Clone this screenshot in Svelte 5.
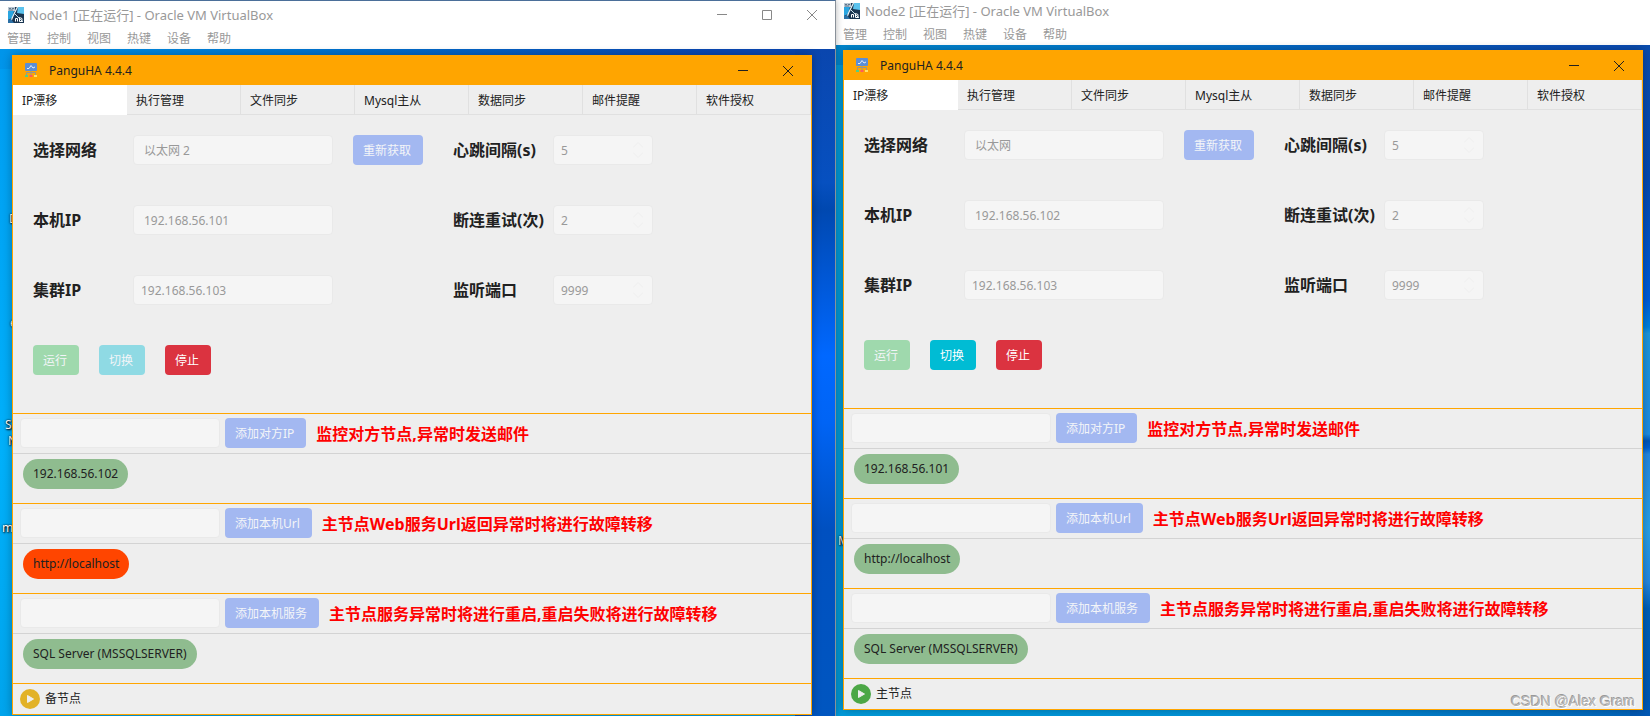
<script lang="ts">
    interface Monitor {
        button: string,
        hint: string,
        item: string,
        failed?: boolean
    }

    interface Shortcut {
        text: string,
        x: number,
        y: number
    }

    interface Machine {
        id: string,
        network: string,
        localIp: string,
        canSwitch: boolean,
        role: string,
        monitors: Array<Monitor>,
        shortcuts: Array<Shortcut>
    }

    const menus = ["管理", "控制", "视图", "热键", "设备", "帮助"]
    const tabs = ["IP漂移", "执行管理", "文件同步", "Mysql主从", "数据同步", "邮件提醒", "软件授权"]
    let activeTab = "IP漂移"

    function buildMonitors(peerIp: string, urlFailed: boolean): Array<Monitor> {
        return [
            { button: "添加对方IP", hint: "监控对方节点,异常时发送邮件", item: peerIp },
            { button: "添加本机Url", hint: "主节点Web服务Url返回异常时将进行故障转移", item: "http://localhost", failed: urlFailed },
            { button: "添加本机服务", hint: "主节点服务异常时将进行重启,重启失败将进行故障转移", item: "SQL Server (MSSQLSERVER)" }
        ]
    }

    const machines: Array<Machine> = [
        {
            id: "Node1",
            network: "以太网 2",
            localIp: "192.168.56.101",
            canSwitch: false,
            role: "备节点",
            monitors: buildMonitors("192.168.56.102", true),
            shortcuts: [
                { text: "D", x: 9, y: 162 },
                { text: "e", x: 10, y: 266 },
                { text: "S", x: 5, y: 368 },
                { text: "N", x: 8, y: 384 },
                { text: "m", x: 2, y: 471 }
            ]
        },
        {
            id: "Node2",
            network: "以太网",
            localIp: "192.168.56.102",
            canSwitch: true,
            role: "主节点",
            monitors: buildMonitors("192.168.56.101", false),
            shortcuts: [
                { text: "M", x: 2, y: 488 }
            ]
        }
    ]
</script>

<main class="screen">
    {#each machines as machine}
        <section class={`vm vm-${machine.id}`}>
            <header class="vm-title">
                <svg class="vm-icon" viewBox="0 0 16 16" aria-hidden="true">
                    <rect width="16" height="16" fill="#1a3550" />
                    <path d="M0 4h6l-2 7-4 2z" fill="#2aa5e0" />
                    <path d="M10 0h6v7l-7-1z" fill="#5cc3ee" />
                    <path d="M0 0h7v4H0z" fill="#b9c6d2" />
                    <path d="M1 1.500h2M4 1.500h2M1 3h4" stroke="#37536d" stroke-width=".7" />
                    <path d="M9.500 0 5 9l-2 5" fill="none" stroke="#e9f4fa" stroke-width="1.200" />
                    <path d="M6 6l9 9" fill="none" stroke="#cfe6f2" />
                    <path d="M0 13l3-1 3 4H0z" fill="#2c70a5" />
                    <path d="M7.500 14.500v-3h2v3M11.500 10.500v4h2.500v-3z" fill="none" stroke="#fff" />
                </svg>
                <h1>{machine.id} [正在运行] - Oracle VM VirtualBox</h1>
                {#if machine.id === "Node1"}
                    <div class="vm-controls">
                        <button aria-label="最小化"><svg viewBox="0 0 10 10"><path d="M0 4.500h10" /></svg></button>
                        <button aria-label="最大化"><svg viewBox="0 0 10 10"><path d="M.5.5h9v9h-9z" /></svg></button>
                        <button aria-label="关闭"><svg viewBox="0 0 10 10"><path d="M0 0l10 10M10 0L0 10" /></svg></button>
                    </div>
                {/if}
            </header>
            <nav class="vm-menu">
                {#each menus as menu}
                    <button>{menu}</button>
                {/each}
            </nav>

            <div class="desktop">
                {#each machine.shortcuts as shortcut}
                    <span class="shortcut" style={`left: ${shortcut.x}px; top: ${shortcut.y}px`}>{shortcut.text}</span>
                {/each}

                <div class="app">
                    <div class="app-title">
                        <svg class="app-icon" viewBox="0 0 12 15" aria-hidden="true">
                            <rect x="0" y="0" width="12" height="8" rx="1" fill="#5b8ed6" />
                            <path d="M2 5.500h2l2-3 2 2.500 2-1" fill="none" stroke="#e3edf8" />
                            <path d="M6 8v4M1.500 12V9.500h9V12" fill="none" stroke="#98978a" />
                            <rect x="0" y="12" width="3" height="2" fill="#4fd08a" />
                            <rect x="4.500" y="12" width="3" height="2" fill="#ff5a5f" />
                            <rect x="9" y="12" width="3" height="2" fill="#ffe066" />
                        </svg>
                        <h2>PanguHA 4.4.4</h2>
                        <div class="app-controls">
                            <button aria-label="最小化"><svg viewBox="0 0 10 10"><path d="M0 4.500h10" /></svg></button>
                            <button aria-label="关闭"><svg viewBox="0 0 10 10"><path d="M0 0l10 10M10 0L0 10" /></svg></button>
                        </div>
                    </div>

                    <div class="tabs" role="tablist">
                        {#each tabs as tab}
                            <button
                                role="tab"
                                class="tab"
                                class:active={tab === activeTab}
                                aria-selected={tab === activeTab}
                                on:click={() => (activeTab = tab)}>{tab}</button>
                        {/each}
                    </div>

                    <div class="settings">
                        <label for={`${machine.id}-network`}>选择网络</label>
                        <select id={`${machine.id}-network`} disabled>
                            <option>{machine.network}</option>
                        </select>
                        <button class="btn primary" disabled>重新获取</button>
                        <label for={`${machine.id}-interval`}>心跳间隔(s)</label>
                        <div class="number">
                            <input id={`${machine.id}-interval`} type="number" value="5" disabled />
                            <svg viewBox="0 0 10 16"><path d="M0 5.500l5-5 5 5M0 10.500l5 5 5-5" /></svg>
                        </div>

                        <label for={`${machine.id}-local`}>本机IP</label>
                        <select id={`${machine.id}-local`} disabled>
                            <option>{machine.localIp}</option>
                        </select>
                        <span></span>
                        <label for={`${machine.id}-retry`}>断连重试(次)</label>
                        <div class="number">
                            <input id={`${machine.id}-retry`} type="number" value="2" disabled />
                            <svg viewBox="0 0 10 16"><path d="M0 5.500l5-5 5 5M0 10.500l5 5 5-5" /></svg>
                        </div>

                        <label for={`${machine.id}-cluster`}>集群IP</label>
                        <input id={`${machine.id}-cluster`} type="text" value="192.168.56.103" disabled />
                        <span></span>
                        <label for={`${machine.id}-port`}>监听端口</label>
                        <div class="number">
                            <input id={`${machine.id}-port`} type="number" value="9999" disabled />
                            <svg viewBox="0 0 10 16"><path d="M0 5.500l5-5 5 5M0 10.500l5 5 5-5" /></svg>
                        </div>

                        <div class="actions">
                            <button class="btn success" disabled>运行</button>
                            <button class="btn info" disabled={!machine.canSwitch}>切换</button>
                            <button class="btn danger">停止</button>
                        </div>
                    </div>

                    {#each machine.monitors as monitor}
                        <div class="monitor">
                            <div class="monitor-add">
                                <input type="text" aria-label={monitor.button} disabled />
                                <button class="btn primary" disabled>{monitor.button}</button>
                                <strong>{monitor.hint}</strong>
                            </div>
                            <div class="monitor-list">
                                <span class="chip" class:failed={monitor.failed}>{monitor.item}</span>
                            </div>
                        </div>
                    {/each}

                    <footer class="status" class:master={machine.canSwitch}>
                        <svg viewBox="0 0 20 20" aria-hidden="true">
                            <circle cx="10" cy="10" r="10" />
                            <path d="M7.500 6.500v7l6-3.500z" fill="#eee" stroke="#eee" stroke-linejoin="round" />
                        </svg>
                        <span>{machine.role}</span>
                    </footer>
                </div>
            </div>
        </section>
    {/each}
    <div class="watermark">CSDN @Alex Gram</div>
</main>

<style>
    :global(body) {
        background-color: #0070cc;
    }

    .screen {
        position: relative;
        display: grid;
        grid-template-columns: 835fr 815fr;
        min-height: 100vh;
        overflow: hidden;
        font-family: "Noto Sans", "Noto Sans CJK SC", sans-serif;
        font-size: 12px;
        line-height: 16px;
        color: #212121;
    }
    button, input, select {
        font: inherit;
        color: inherit;
        margin: 0;
        padding: 0;
        border: none;
        background: none;
        box-sizing: border-box;
    }
    h1, h2 {
        margin: 0;
        font-size: inherit;
        font-weight: normal;
    }

    /* Virtual machine windows */
    .vm {
        display: flex;
        flex-direction: column;
        min-width: 0;
        background-color: #fff;
        color: #999;
    }
    .vm-Node1 {
        position: relative;
        z-index: 1;
        border-top: 1px solid #4b6f99;
        border-right: 1px solid #8a9199;
        margin-right: -1px;
        box-shadow: 0 0 7px rgba(0, 0, 0, 0.3);
    }
    /* The second window sits partly above the screen edge */
    .vm-Node2 {
        margin-top: -3px;
        padding-left: 1px;
    }
    .vm-title {
        display: flex;
        align-items: center;
        height: 28px;
        padding-left: 8px;
    }
    .vm-title h1 {
        font-size: 13px;
    }
    .vm-icon {
        width: 16px;
        height: 16px;
        margin-right: 5px;
    }
    .vm-controls, .app-controls {
        display: flex;
        margin-left: auto;
        padding-right: 1px;
    }
    .vm-controls button, .app-controls button {
        display: flex;
        align-items: center;
        justify-content: center;
        width: 45px;
        height: 28px;
    }
    .vm-controls svg, .app-controls svg {
        width: 10px;
        height: 10px;
        fill: none;
        stroke: #888;
    }
    .vm-menu {
        display: flex;
        gap: 16px;
        height: 20px;
        padding-left: 7px;
    }

    /* Windows wallpaper */
    .desktop {
        position: relative;
        flex: 1;
        padding: 6px 23px 1px 12px;
        background:
            linear-gradient(#0a46ae, #0650c0 20%, #0048b0 24%, #0068ff 46%, #0064f5 56%, #0050c0 72%, #0056c0) right / 40px 100% no-repeat,
            linear-gradient(90deg, #0095ea, #0078d4 35%, #0a48b4 85%) top / 100% 20px no-repeat,
            linear-gradient(#009cf0, #00b0fa 60%, #00a4ec);
    }
    .vm-Node2 .desktop {
        padding: 5px 7px 6px 7px;
        background:
            linear-gradient(#0a4cae, #064ab0 20%, #005cd8 38%, #0080dc 42%, #1e96dc 43%, #1e8ce0 58%, #0056b8 59%, #0060d0 60%, #2488e0 61%, #28a0e6 72%, #2488e0 80%, #0060b8 84%, #0058b4) right / 20px 100% no-repeat,
            linear-gradient(90deg, #0088d0, #0078cc 35%, #0a4cb4 90%) top / 100% 20px no-repeat,
            linear-gradient(90deg, #009cdc, #0094da 50%, #0064bc);
    }
    .shortcut {
        position: absolute;
        color: #fff;
        text-shadow: 1px 1px 2px #000, 0 0 2px #000;
    }

    /* PanguHA window */
    .app {
        position: relative;
        border: 1px solid orange;
        background-color: #eee;
        color: #212121;
        box-shadow: 0 0 9px rgba(0, 0, 0, 0.3);
    }
    .app-title {
        display: flex;
        align-items: center;
        height: 29px;
        padding-left: 12px;
        background-color: orange;
    }
    .app-title h2 {
        font-size: 12px;
    }
    .app-icon {
        width: 12px;
        height: 15px;
        margin-right: 12px;
    }
    .app-controls svg {
        stroke: #212121;
    }
    .tabs {
        display: grid;
        grid-template-columns: repeat(7, 1fr);
    }
    .tab {
        height: 30px;
        padding: 2px 9px 0;
        text-align: left;
        border-right: 1px solid #e0e0e0;
        border-bottom: 1px solid #e0e0e0;
    }
    .tab.active {
        background-color: #fff;
        border-color: #fff;
    }

    .settings {
        display: grid;
        grid-template-columns: 100px 200px 70px 100px 100px;
        grid-auto-rows: 70px;
        align-items: center;
        padding: 0 20px 18px;
    }
    .settings .btn.primary {
        margin: 0 -20px 0 20px;
    }
    .settings label {
        font-size: 16px;
        line-height: 24px;
        font-weight: bold;
        white-space: nowrap;
    }
    .settings label:nth-of-type(even) {
        margin-left: 50px;
    }
    .settings .number {
        margin-left: 50px;
    }
    input, select {
        width: 200px;
        height: 30px;
        padding: 0 7px;
        border: 1px solid #e9e9e9;
        border-radius: 4px;
        background-color: #f5f5f5;
        color: #999;
        opacity: 1;
        appearance: none;
    }
    select {
        padding: 1px 10px 0;
    }
    .number {
        position: relative;
        width: 100px;
    }
    .number input {
        width: 100px;
        appearance: textfield;
    }
    .number svg {
        position: absolute;
        right: 10px;
        top: 7px;
        width: 10px;
        height: 16px;
        fill: none;
        stroke: #eee;
    }

    .btn {
        height: 30px;
        padding: 2px 12px 0 10px;
        border-radius: 4px;
        color: #fff;
        white-space: nowrap;
    }
    .btn:disabled {
        color: #f3f5f8;
    }
    .btn.primary {
        background-color: #a3b8f1;
    }
    .btn.success {
        background-color: #9fd9ad;
    }
    .btn.info {
        background-color: #00bcd4;
    }
    .btn.info:disabled {
        background-color: #8fdae4;
    }
    .btn.danger {
        background-color: #db3340;
    }
    .actions {
        grid-column: 1 / -1;
        display: flex;
        gap: 20px;
    }

    /* Monitored items */
    .monitor {
        border-top: 1px solid orange;
    }
    .monitor-add {
        display: flex;
        align-items: center;
        padding: 4px 7px 5px;
        border-bottom: 1px solid lightgray;
    }
    .monitor-add input {
        margin-right: 5px;
    }
    .monitor-add strong {
        margin-left: 10px;
        padding-top: 2px;
        font-size: 16px;
        line-height: 24px;
        color: red;
        white-space: nowrap;
    }
    .monitor-list {
        height: 44px;
        padding: 5px 10px 0;
    }
    .chip {
        display: inline-block;
        padding: 0 10px;
        line-height: 30px;
        border-radius: 15px;
        background-color: darkseagreen;
    }
    .chip.failed {
        background-color: orangered;
    }
    .status {
        display: flex;
        align-items: center;
        gap: 5px;
        height: 30px;
        padding-left: 7px;
        border-top: 1px solid orange;
    }
    .status svg {
        width: 20px;
        height: 20px;
        fill: #e2b227;
    }
    .status.master svg {
        fill: #4ca746;
    }

    .watermark {
        position: absolute;
        right: 15px;
        bottom: 7px;
        z-index: 2;
        font-family: "Liberation Sans", Arial, sans-serif;
        font-size: 14px;
        color: #b4b4b4;
        text-shadow: 1px 1px 0 #fff, -1px -1px 0 #999;
    }
</style>
